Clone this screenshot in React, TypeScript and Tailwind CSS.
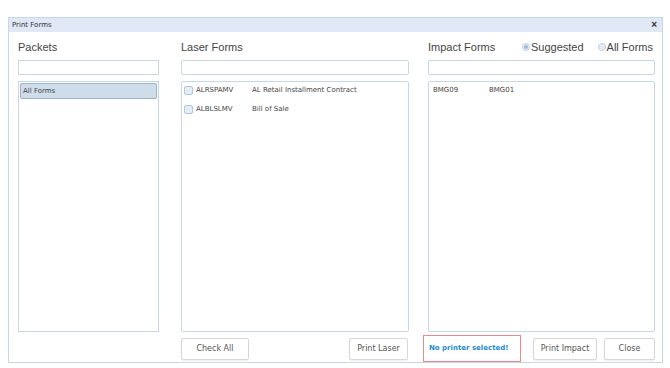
import React, { useState } from 'react';

const laserForms = [
    { code: 'ALRSPAMV', name: 'AL Retail Installment Contract' },
    { code: 'ALBLSLMV', name: 'Bill of Sale' },
];

const impactForms = ['BMG09', 'BMG01'];

const btn =
    "h-[22px] border border-[#d6d6d6] rounded-[2px] bg-white text-[8px] text-[#555] font-['DejaVu_Sans',sans-serif] shadow-[0_1px_1px_rgba(0,0,0,0.06)] flex items-center justify-center";

const Radio: React.FC<{ checked: boolean; label: string; onClick: () => void }> = ({ checked, label, onClick }) => (
    <button onClick={onClick} className="flex items-center text-[11px] text-[#444]">
        <span className="w-[8px] h-[8px] rounded-full border border-[#bfd0e2] bg-[#e4edf7] flex items-center justify-center mr-[1px]">
            {checked && <span className="w-[4px] h-[4px] rounded-full bg-[#a3b8cf]"></span>}
        </span>
        {label}
    </button>
);

const App: React.FC = () => {
    const [mode, setMode] = useState<'suggested' | 'all'>('suggested');
    const [checked, setChecked] = useState<string[]>([]);

    const toggle = (code: string) =>
        setChecked(prev => (prev.includes(code) ? prev.filter(c => c !== code) : [...prev, code]));

    return (
        <div className="w-[670px] h-[368px] bg-white pt-[17px] pl-[8px] font-['Liberation_Sans',Arial,sans-serif]">
            <div className="w-[655px] h-[346px] border border-[#c8d7e8] flex flex-col">
                {/* title bar */}
                <div className="h-[14px] bg-[#dfe8f4] flex items-center justify-between pl-[3px] pr-[5px]">
                    <span className="text-[7px] text-[#333] font-['DejaVu_Sans',sans-serif]">Print Forms</span>
                    <span className="text-[10px] leading-none text-[#333] font-bold">×</span>
                </div>

                <div className="flex-1 flex pl-[9px] pr-[6px]">
                    {/* packets */}
                    <div className="w-[141px] flex flex-col">
                        <div className="h-[28px] flex items-center pt-[2px] text-[11px] text-[#444]">Packets</div>
                        <input className="h-[15px] border border-[#c8d7e8] outline-none" />
                        <div className="mt-[6px] h-[251px] border border-[#c8d7e8] p-[1px]">
                            <div className="h-[16px] bg-[#cfdcea] border border-[#9db3c9] rounded-[2px] flex items-center px-[2px] text-[7px] text-[#444] font-['DejaVu_Sans',sans-serif]">
                                All Forms
                            </div>
                        </div>
                    </div>

                    {/* laser forms */}
                    <div className="w-[228px] ml-[22px] flex flex-col">
                        <div className="h-[28px] flex items-center pt-[2px] text-[11px] text-[#444]">Laser Forms</div>
                        <input className="h-[15px] border border-[#c8d7e8] rounded-[2px] outline-none" />
                        <div className="mt-[6px] h-[251px] border border-[#c8d7e8] rounded-[2px] pt-[1px] pl-[2px] flex flex-col gap-[5px]">
                            {laserForms.map(f => (
                                <div
                                    key={f.code}
                                    onClick={() => toggle(f.code)}
                                    className="h-[14px] flex items-center text-[7px] text-[#444] font-['DejaVu_Sans',sans-serif]"
                                >
                                    <span className="w-[9px] h-[9px] border border-[#b3c6da] bg-[#e4edf7] rounded-[2px] mr-[3px] flex items-center justify-center text-[7px]">
                                        {checked.includes(f.code) ? '✓' : ''}
                                    </span>
                                    <span className="w-[56px]">{f.code}</span>
                                    <span>{f.name}</span>
                                </div>
                            ))}
                        </div>
                        <div className="mt-[6px] flex justify-between pr-[1px]">
                            <button className={`${btn} w-[68px]`} onClick={() => setChecked(laserForms.map(f => f.code))}>
                                Check All
                            </button>
                            <button className={`${btn} w-[59px]`}>Print Laser</button>
                        </div>
                    </div>

                    {/* impact forms */}
                    <div className="w-[227px] ml-[19px] flex flex-col">
                        <div className="h-[28px] flex items-center pt-[2px] text-[11px] text-[#444]">
                            <span>Impact Forms</span>
                            <div className="ml-auto flex items-center gap-[14px] pr-[2px]">
                                <Radio checked={mode === 'suggested'} label="Suggested" onClick={() => setMode('suggested')} />
                                <Radio checked={mode === 'all'} label="All Forms" onClick={() => setMode('all')} />
                            </div>
                        </div>
                        <input className="h-[15px] border border-[#c8d7e8] rounded-[2px] outline-none" />
                        <div className="mt-[6px] h-[251px] border border-[#c8d7e8] rounded-[2px] pt-[1px] pl-[4px]">
                            <div className="h-[14px] flex items-center text-[7px] text-[#444] font-['DejaVu_Sans',sans-serif]">
                                {impactForms.map(f => (
                                    <span key={f} className="w-[56px]">{f}</span>
                                ))}
                            </div>
                        </div>
                        <div className="mt-[3px] flex items-start">
                            <div className="-ml-[5px] w-[98px] h-[27px] border border-[#e88a8a] flex items-center pl-[5px] text-[7px] font-bold text-[#1b8ad3] font-['DejaVu_Sans',sans-serif]">
                                No printer selected!
                            </div>
                            <button className={`${btn} w-[64px] ml-auto mt-[3px]`}>Print Impact</button>
                            <button className={`${btn} w-[51px] ml-[7px] mt-[3px]`}>Close</button>
                        </div>
                    </div>
                </div>
            </div>
        </div>
    );
};

export default App;
